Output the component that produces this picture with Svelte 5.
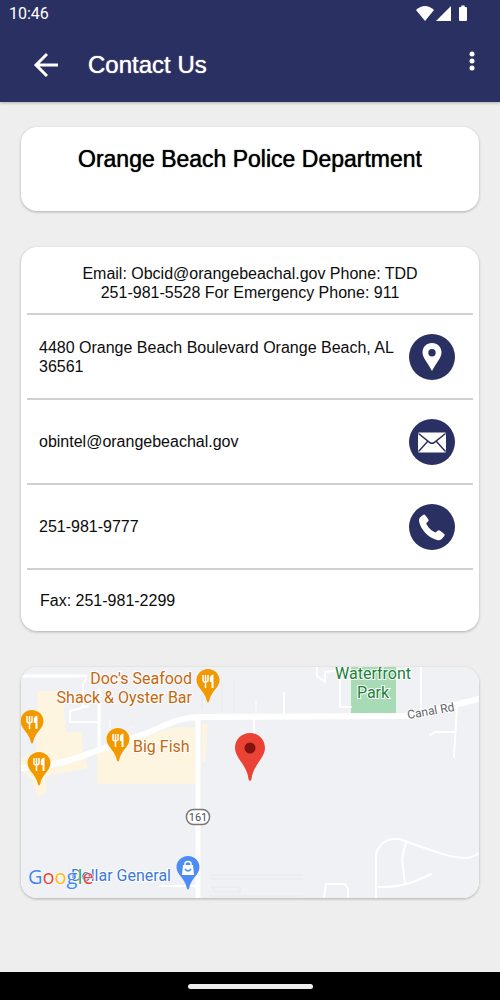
<script>
  const foodPins = [
    { x: 208, y: 681 },
    { x: 32, y: 722 },
    { x: 118, y: 740 },
    { x: 39, y: 764 },
  ];
</script>

<div class="screen">
  <header>
    <div class="status">
      <span>10:46</span>
      <svg class="status-icons" width="54" height="18" viewBox="0 0 54 18" fill="#fff" aria-hidden="true">
        <path d="M2 5 Q11 -3 20 5 L11 16 Z" />
        <path d="M37 1 V16 H22 Z" />
        <path d="M45 3 q0 -1 1 -1 h1.300 v-1.500 h3.400 v1.500 h1.300 q1 0 1 1 v12 q0 1 -1 1 h-6 q-1 0 -1 -1 Z" />
      </svg>
    </div>
    <div class="toolbar">
      <button class="icon-button" aria-label="Back">
        <svg width="26" height="26" viewBox="0 0 26 26" fill="none" stroke="#fff" stroke-width="3">
          <path d="M25 13 H3 M14 2 L3 13 L14 24" />
        </svg>
      </button>
      <h1>Contact Us</h1>
      <button class="icon-button more" aria-label="More options">
        <svg width="6" height="20" viewBox="0 0 6 20" fill="#fff">
          <circle cx="3" cy="3" r="2.500" /><circle cx="3" cy="10" r="2.500" /><circle cx="3" cy="17" r="2.500" />
        </svg>
      </button>
    </div>
  </header>

  <main>
    <section class="card heading"><h2>Orange Beach Police Department</h2></section>

    <section class="card details">
      <p class="intro">Email: Obcid@orangebeachal.gov Phone: TDD 251-981-5528 For Emergency Phone: 911</p>
      <div class="row">
        <span>4480 Orange Beach Boulevard Orange Beach, AL 36561</span>
        <button class="round" aria-label="Show address on map">
          <svg viewBox="0 0 46 46">
            <path fill="#fff" fill-rule="evenodd" d="M23 9 C17.500 9 13.500 13 13.500 18.500 C13.500 24 19 29 23 37 C27 29 32.500 24 32.500 18.500 C32.500 13 28.500 9 23 9 Z M23 15 a3.700 3.700 0 1 1 0 7.400 a3.700 3.700 0 1 1 0 -7.400 Z" />
          </svg>
        </button>
      </div>
      <div class="row">
        <span>obintel@orangebeachal.gov</span>
        <button class="round" aria-label="Send email">
          <svg viewBox="0 0 46 46">
            <rect x="9" y="13.500" width="28" height="20" rx="1" fill="#fff" />
            <path d="M9.500 14.500 L20.500 23.300 Q23 25.300 25.500 23.300 L36.500 14.500 M9.500 32.500 L18.800 22.300 M36.500 32.500 L27.200 22.300" fill="none" stroke="#2a3162" stroke-width="1.500" />
          </svg>
        </button>
      </div>
      <div class="row">
        <span>251-981-9777</span>
        <button class="round" aria-label="Call">
          <svg viewBox="0 0 46 46">
            <path fill="#fff" d="M11 13.500 L14 11 Q15.300 10 16.300 11.300 L19.300 15.300 Q20.200 16.500 19 17.500 L17.200 19.300 C18.500 23 22.500 27 26.700 28.600 L28.500 26.700 Q29.500 25.700 30.800 26.500 L35 29.700 Q36.300 30.700 35.300 32 L32.500 35.300 Q30.500 36.700 28 36 C19 33.500 11.500 25.500 10 17 Q9.500 15 11 13.500 Z" />
          </svg>
        </button>
      </div>
      <p class="fax">Fax: 251-981-2299</p>
    </section>

    <section class="card map" aria-label="Map">
      <svg viewBox="21 667 458 231">
        <defs>
          <g id="food-pin">
            <path fill="#f29900" d="M0 -12 C-6.500 -12 -11.500 -7 -11.500 -1 C-11.500 7 -3 10 -1.200 20 Q0 23 1.200 20 C3 10 11.500 7 11.500 -1 C11.500 -7 6.500 -12 0 -12 Z" />
            <path fill="none" stroke="#fff" stroke-width="1.500" d="M-5 -6 V-1 Q-5 1 -3 1 Q0 1 0 -1 V-6 M-2.500 -6 V7" />
            <path fill="#fff" d="M5.500 -6.500 V7 H3.500 V1 H1.800 V-3 Q2 -6 5.500 -6.500 Z" />
          </g>
        </defs>
        <rect x="21" y="667" width="458" height="231" fill="#f0f1f4" />
        <g fill="#fef5e0">
          <path d="M38 691 H62 L66 732 H82 V748 L88 768 L45 776 L47 790 L38 798 L33 780 L21 770 V758 L36 752 Z" />
          <path d="M97 752 L175 727 H195 V784 H97 Z" />
          <path d="M202 724 H208 L205 762 H202 Z" />
        </g>
        <rect x="351" y="667" width="45" height="46" fill="#a8dab5" />
        <g fill="none" stroke="#fff" stroke-linecap="round" stroke-linejoin="round">
          <path stroke-width="3" d="M22 676 H86 M99 690 V749" />
          <path stroke-width="2" d="M70 722 V711 L88 706 M70 722 H99 M83 706 V684 L86 679" />
          <path stroke-width="1" d="M110 721 V738 M131 704 V728 M256 713 V700" />
          <path stroke-width="2" d="M317 667 V676 L325 682 V672 L340 670 V707 H351 M421 667 V711 M284 693 V713 M254 718 V740 M457 706 L454 757 M454 732 H435 L430 735" />
          <path stroke-width="6" d="M21 768 C65 767 95 750 130 739 S169 719 199 717 L410 716 L479 699" />
          <path stroke-width="5" d="M198 719 V898" />
          <path stroke-width="2" d="M160 886 H198 M324 898 L326 884 H345 L348 889 V898" />
          <path stroke-width="2" d="M376 898 V855 C378 844 387 838 397 839 Q402 839 405 841 C425 848 450 858 465 858 Q472 858 479 853 M406 842 L402 859 L405 884 M376 887 Q400 888 418 880 L431 874" />
        </g>
        <g fill="none" stroke="#e7e8eb">
          <path d="M210 875 H303 M210 879 H303 M210 896 H303 M210 887 H240 V892 H214 V887 M222 684 V712 M234 680 V712 M202 667 V709 M131 704 V727" />
        </g>

        <g class="label" fill="#c5670c">
          <text x="192" y="684" text-anchor="end">Doc's Seafood</text>
          <text x="192" y="703" text-anchor="end">Shack &amp; Oyster Bar</text>
          <text x="133" y="752">Big Fish</text>
        </g>
        <g class="label" fill="#188038" text-anchor="middle">
          <text x="373" y="679">Waterfront</text>
          <text x="373" y="698">Park</text>
        </g>
        <text class="label road" x="408" y="719" transform="rotate(-10 408 719)" fill="#5f6368">Canal Rd</text>

        {#each foodPins as pin}
          <use href="#food-pin" x={pin.x} y={pin.y} />
        {/each}

        <rect x="186.500" y="809.500" width="23" height="15" rx="7" fill="#fff" stroke="#777" stroke-width="1.500" />
        <text class="shield" x="198" y="821" text-anchor="middle" fill="#4b4f53">161</text>

        <path fill="#ea4335" d="M250 733 C241.500 733 235 739.500 235 748 C235 758 247 765 248.500 779 Q250 783 251.500 779 C253 765 265 758 265 748 C265 739.500 258.500 733 250 733 Z" />
        <circle cx="250" cy="748" r="5.500" fill="#811411" />

        <text class="label" x="171" y="881" text-anchor="end" fill="#3c78d8">Dollar General</text>
        <g transform="translate(188 868)">
          <path fill="#4d8bf5" d="M0 -12 C-6.500 -12 -11.500 -7 -11.500 -1 C-11.500 7 -3 10 -1.200 20 Q0 23 1.200 20 C3 10 11.500 7 11.500 -1 C11.500 -7 6.500 -12 0 -12 Z" />
          <path fill="#fff" d="M-5 -3 H5 L6 7 H-6 Z" />
          <path fill="none" stroke="#fff" stroke-width="1.500" d="M-3 -2 V-4 Q-3 -6.500 0 -6.500 Q3 -6.500 3 -4 V-2" />
          <path fill="none" stroke="#4d8bf5" stroke-width="1.500" d="M-3 1 Q0 5 3 1" />
        </g>
        <text class="google" x="28" y="884"><tspan fill="#4285f4">G</tspan><tspan fill="#ea4335">o</tspan><tspan fill="#fbbc04">o</tspan><tspan fill="#4285f4">g</tspan><tspan fill="#34a853">l</tspan><tspan fill="#ea4335">e</tspan></text>
      </svg>
    </section>
  </main>

  <footer><div class="handle"></div></footer>
</div>

<style>
  :global(body) {
    margin: 0;
    background: #efeeef;
  }
  .screen {
    display: flex;
    flex-direction: column;
    min-height: 100vh;
    font: 16px/19px "Liberation Sans", Arial, sans-serif;
    color: #0c0c0c;
  }
  header {
    background: #2a3162;
    color: #fff;
    box-shadow: 0 1px 3px #0004;
  }
  .status {
    display: flex;
    align-items: center;
    justify-content: space-between;
    height: 28px;
    padding: 0 32px 0 9px;
    font: 16px/28px Roboto, sans-serif;
  }
  .toolbar {
    display: flex;
    align-items: center;
    height: 74px;
    padding: 0 16px 0 24px;
  }
  .icon-button {
    display: grid;
    place-items: center;
    width: 44px;
    height: 44px;
    padding: 0;
    border: 0;
    background: none;
  }
  .more {
    width: 24px;
    margin: 0 0 8px auto;
  }
  h1,
  h2 {
    margin: 0;
    line-height: 28px;
    font-weight: 400;
    text-shadow: 0 0 1px currentColor;
  }
  h1 {
    margin-left: 20px;
    font-size: 24px;
  }
  h2 {
    font-size: 23px;
    color: #000;
  }
  main {
    display: flex;
    flex: 1;
    flex-direction: column;
    gap: 36px;
    padding: 25px 21px;
  }
  .card {
    border-radius: 16px;
    background: #fff;
    box-shadow: 0 1px 3px #0004;
  }
  .heading {
    padding: 18px 16px 38px;
    text-align: center;
  }
  .details {
    padding: 0 6px;
  }
  .intro {
    margin: 0;
    padding: 17px 48px 11px;
    text-align: center;
  }
  .row {
    display: flex;
    align-items: center;
    justify-content: space-between;
    gap: 8px;
    min-height: 83px;
    padding: 0 18px 0 12px;
    border-top: 2px solid #d0d0d0;
  }
  .round {
    flex: none;
    width: 46px;
    height: 46px;
    padding: 0;
    border: 0;
    border-radius: 50%;
    background: #2a3162;
  }
  .round svg {
    display: block;
  }
  .fax {
    margin: 0;
    padding: 21px 13px;
    border-top: 2px solid #d0d0d0;
  }
  .map {
    overflow: hidden;
  }
  .map svg {
    display: block;
    width: 100%;
  }
  .label {
    font: 16px Roboto, sans-serif;
    paint-order: stroke;
    stroke: #fff;
    stroke-width: 2px;
  }
  .road {
    font-size: 12px;
  }
  .shield {
    font: 11px Roboto, sans-serif;
  }
  .google {
    font: 20px "Open Sans", sans-serif;
    paint-order: stroke;
    stroke: #fff;
    stroke-width: 1px;
  }
  footer {
    display: grid;
    place-items: center;
    height: 28px;
    background: #000;
  }
  .handle {
    width: 25%;
    height: 5px;
    border-radius: 3px;
    background: #eee;
  }
</style>
